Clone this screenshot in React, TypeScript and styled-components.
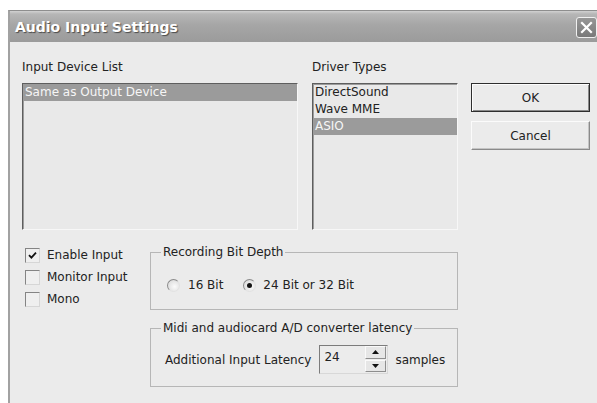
import React from "react";
import styled, { createGlobalStyle } from "styled-components";

const Global = createGlobalStyle`
  html, body { margin: 0; padding: 0; background: #ffffff; overflow: hidden; }
  body { font-family: "DejaVu Sans", Verdana, sans-serif; font-size: 12px; color: #222222; }
  * { box-sizing: border-box; }
`;

const Window = styled.div`
  margin: 10px 0 0 8px;
  width: 591px;
  height: 393px;
  border-left: 2px solid #a2a2a2;
  border-top: 1px solid #8e8e8e;
  background: #ebebeb;
  display: flex;
  flex-direction: column;
  overflow: hidden;
`;

const TitleBar = styled.div`
  height: 31px;
  flex: none;
  display: flex;
  align-items: center;
  justify-content: space-between;
  padding: 0 2px 0 5px;
  background: linear-gradient(#d2d2d2 0px, #b6b6b6 3px, #a6a6a6 45%, #9b9b9b 100%);
`;

const Title = styled.span`
  font-family: "DejaVu Sans", Verdana, sans-serif;
  font-weight: bold;
  font-size: 14px;
  color: #ffffff;
  text-shadow: 1px 1px 1px #4a4a4a;
  padding-top: 1px;
`;

const CloseButton = styled.div`
  width: 21px;
  height: 21px;
  border: 1px solid #f0f0f0;
  border-radius: 3px;
  background: linear-gradient(#969696, #7a7a7a);
  display: flex;
  align-items: center;
  justify-content: center;
  margin-top: 2px;
`;

const Body = styled.div`
  flex: 1;
  padding: 17px 0 0 12px;
  display: flex;
  flex-direction: column;
`;

const TopRow = styled.div`
  display: flex;
  align-items: flex-start;
`;

const Column = styled.div<{ $width: number; $gap: number }>`
  width: ${(p) => p.$width}px;
  margin-right: ${(p) => p.$gap}px;
  display: flex;
  flex-direction: column;
`;

const Label = styled.div`
  height: 16px;
  line-height: 16px;
  margin-bottom: 8px;
  white-space: nowrap;
`;

const ListBox = styled.div`
  height: 147px;
  background: #e9e9e9;
  border-top: 1px solid #5e5e5e;
  border-left: 1px solid #5e5e5e;
  border-right: 1px solid #f7f7f7;
  border-bottom: 1px solid #f7f7f7;
  box-shadow: inset 1px 1px 0 #9c9c9c;
  padding-left: 1px;
`;

const ListItem = styled.div<{ $selected?: boolean }>`
  height: 17px;
  line-height: 17px;
  padding-left: 1px;
  white-space: nowrap;
  background: ${(p) => (p.$selected ? "#9b9b9b" : "transparent")};
  color: ${(p) => (p.$selected ? "#f6f6f6" : "#222222")};
`;

const ButtonStack = styled.div`
  padding-top: 24px;
  display: flex;
  flex-direction: column;
  gap: 9px;
  width: 119px;
`;

const Button = styled.div<{ $default?: boolean }>`
  height: 29px;
  display: flex;
  align-items: center;
  justify-content: center;
  background: #ebebeb;
  border: 1px solid;
  border-color: ${(p) =>
    p.$default ? "#2e2e2e" : "#fbfbfb #8a8a8a #8a8a8a #fbfbfb"};
  box-shadow: ${(p) =>
    p.$default
      ? "inset 1px 1px 0 #fdfdfd, inset -1px -1px 0 #8a8a8a"
      : "inset -1px -1px 0 #c4c4c4"};
`;

const BottomRow = styled.div`
  display: flex;
  margin-top: 14px;
`;

const CheckColumn = styled.div`
  width: 128px;
  padding: 4px 0 0 3px;
  display: flex;
  flex-direction: column;
`;

const CheckRow = styled.label`
  height: 22px;
  display: flex;
  align-items: flex-start;
  gap: 7px;
`;

const CheckBox = styled.span`
  width: 15px;
  height: 15px;
  flex: none;
  border: 1px solid;
  border-color: #848484 #d6d6d6 #d6d6d6 #848484;
  background: #efefef;
  display: flex;
  align-items: center;
  justify-content: center;
`;

const CheckText = styled.span`
  line-height: 15px;
  white-space: nowrap;
`;

const GroupColumn = styled.div`
  width: 308px;
  display: flex;
  flex-direction: column;
  gap: 10px;
`;

const Group = styled.fieldset<{ $height: number }>`
  margin: 0;
  padding: 0;
  min-width: 0;
  height: ${(p) => p.$height}px;
  border: 1px solid #b6b6b6;
`;

const Legend = styled.legend`
  margin-left: 10px;
  padding: 0 2px;
  line-height: 16px;
  white-space: nowrap;
`;

const GroupContent = styled.div<{ $top: number; $left: number }>`
  padding: ${(p) => p.$top}px 0 0 ${(p) => p.$left}px;
  display: flex;
  align-items: center;
`;

const RadioOption = styled.label<{ $gap: number }>`
  display: flex;
  align-items: center;
  gap: ${(p) => p.$gap}px;
  margin-right: 20px;
  white-space: nowrap;
`;

const Radio = styled.span<{ $checked?: boolean }>`
  width: 13px;
  height: 13px;
  border-radius: 50%;
  border: 1px solid;
  border-color: #8a8a8a #e2e2e2 #e2e2e2 #8a8a8a;
  background: radial-gradient(circle at 60% 60%, #fbfbfb 0%, #dedede 75%);
  display: flex;
  align-items: center;
  justify-content: center;

  &::after {
    content: "";
    display: ${(p) => (p.$checked ? "block" : "none")};
    width: 5px;
    height: 5px;
    border-radius: 50%;
    background: #141414;
  }
`;

const FieldText = styled.span`
  white-space: nowrap;
`;

const Spinner = styled.div`
  width: 69px;
  height: 29px;
  margin: 0 7px 0 8px;
  display: flex;
  border: 1px solid;
  border-color: #7c7c7c #d8d8d8 #d8d8d8 #7c7c7c;
  background: #ececec;
`;

const SpinValue = styled.div`
  flex: 1;
  padding: 4px 0 0 4px;
  line-height: 14px;
`;

const SpinButtons = styled.div`
  width: 22px;
  display: flex;
  flex-direction: column;
  padding: 0 1px 1px 0;
  gap: 1px;
`;

const SpinButton = styled.div`
  flex: 1;
  display: flex;
  align-items: center;
  justify-content: center;
  background: #e6e6e6;
  border: 1px solid;
  border-color: #fafafa #8e8e8e #8e8e8e #fafafa;
`;

const Arrow = ({ up }: { up?: boolean }) => (
  <svg width="7" height="4" viewBox="0 0 7 4">
    <path d={up ? "M0 4 L3.5 0 L7 4 Z" : "M0 0 L3.5 4 L7 0 Z"} fill="#111" />
  </svg>
);

const CheckMark = () => (
  <svg width="9" height="9" viewBox="0 0 9 9">
    <path d="M1 4.2 L3.4 6.6 L8 1.6" stroke="#111" strokeWidth="1.8" fill="none" />
  </svg>
);

const CloseGlyph = () => (
  <svg width="13" height="13" viewBox="0 0 13 13">
    <path d="M2 2 L11 11 M11 2 L2 11" stroke="#ffffff" strokeWidth="2.2" strokeLinecap="square" />
  </svg>
);

const options = [
  { label: "Enable Input", checked: true },
  { label: "Monitor Input", checked: false },
  { label: "Mono", checked: false },
];

export default function App() {
  return (
    <>
      <Global />
      <Window>
        <TitleBar>
          <Title>Audio Input Settings</Title>
          <CloseButton>
            <CloseGlyph />
          </CloseButton>
        </TitleBar>
        <Body>
          <TopRow>
            <Column $width={276} $gap={14}>
              <Label>Input Device List</Label>
              <ListBox>
                <ListItem $selected>Same as Output Device</ListItem>
              </ListBox>
            </Column>
            <Column $width={146} $gap={13}>
              <Label>Driver Types</Label>
              <ListBox>
                <ListItem>DirectSound</ListItem>
                <ListItem>Wave MME</ListItem>
                <ListItem $selected>ASIO</ListItem>
              </ListBox>
            </Column>
            <ButtonStack>
              <Button $default>OK</Button>
              <Button>Cancel</Button>
            </ButtonStack>
          </TopRow>
          <BottomRow>
            <CheckColumn>
              {options.map((o) => (
                <CheckRow key={o.label}>
                  <CheckBox>{o.checked && <CheckMark />}</CheckBox>
                  <CheckText>{o.label}</CheckText>
                </CheckRow>
              ))}
            </CheckColumn>
            <GroupColumn>
              <Group $height={66}>
                <Legend>Recording Bit Depth</Legend>
                <GroupContent $top={18} $left={16}>
                  <RadioOption $gap={8}>
                    <Radio />
                    <FieldText>16 Bit</FieldText>
                  </RadioOption>
                  <RadioOption $gap={7}>
                    <Radio $checked />
                    <FieldText>24 Bit or 32 Bit</FieldText>
                  </RadioOption>
                </GroupContent>
              </Group>
              <Group $height={67}>
                <Legend>Midi and audiocard A/D converter latency</Legend>
                <GroupContent $top={9} $left={14}>
                  <FieldText>Additional Input Latency</FieldText>
                  <Spinner>
                    <SpinValue>24</SpinValue>
                    <SpinButtons>
                      <SpinButton>
                        <Arrow up />
                      </SpinButton>
                      <SpinButton>
                        <Arrow />
                      </SpinButton>
                    </SpinButtons>
                  </Spinner>
                  <FieldText>samples</FieldText>
                </GroupContent>
              </Group>
            </GroupColumn>
          </BottomRow>
        </Body>
      </Window>
    </>
  );
}
